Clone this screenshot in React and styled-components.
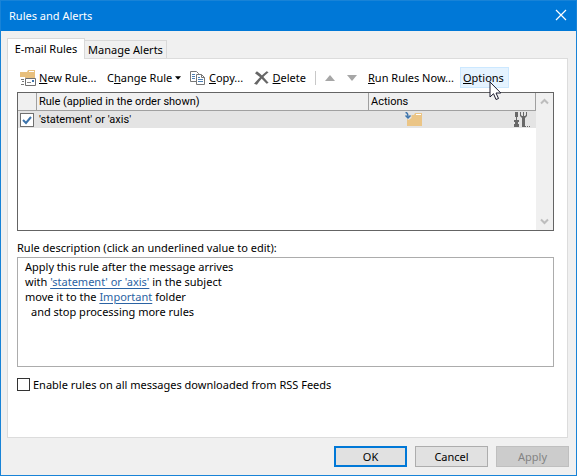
import React from "react";
import styled, { createGlobalStyle } from "styled-components";

const GlobalStyle = createGlobalStyle`
  * { box-sizing: border-box; }
  body {
    margin: 0;
    background: #f0f0f0;
    color: #000;
    font: 11px/15px "Noto Sans", "Open Sans", sans-serif;
  }
  button { font: inherit; color: inherit; margin: 0; }
`;

const Dialog = styled.main`
  display: flex;
  flex-direction: column;
  min-height: 100vh;
  border: 1px solid #1883d7;
  background: #f0f0f0;
`;

const TitleBar = styled.header`
  display: flex;
  align-items: center;
  justify-content: space-between;
  height: 30px;
  padding: 0 9px 2px 8px;
  background: #0078d7;
  color: #fff;
`;

const Title = styled.h1`
  margin: 0;
  font-size: 11px;
  font-weight: 400;
`;

const CloseButton = styled.button`
  display: flex;
  padding: 0;
  border: 0;
  background: none;
`;

const Tabs = styled.nav`
  display: flex;
  align-items: flex-end;
  margin: 7px 6px 0;
`;

const Tab = styled.button`
  flex: none;
  position: relative;
  height: ${(p) => (p.$active ? 21 : 18)}px;
  width: ${(p) => (p.$active ? 78 : 82)}px;
  padding: ${(p) => (p.$active ? "0 0 2px" : 0)};
  margin-bottom: ${(p) => (p.$active ? -1 : 0)}px;
  border: 1px solid #d9d9d9;
  border-left-width: ${(p) => (p.$active ? 1 : 0)}px;
  border-bottom: 0;
  background: ${(p) => (p.$active ? "#fff" : "#f0f0f0")};
  white-space: nowrap;
`;

const Panel = styled.section`
  flex: 1;
  display: flex;
  flex-direction: column;
  margin: 0 8px 0 6px;
  padding: 8px 13px 0 9px;
  border: 1px solid #dcdcdc;
  background: #fff;
`;

const Toolbar = styled.div`
  display: flex;
  align-items: center;
  height: 21px;
  white-space: nowrap;
`;

const ToolButton = styled.button`
  display: flex;
  align-items: center;
  gap: 3px;
  height: 21px;
  flex: none;
  width: ${(p) => p.$width}px;
  padding: 0 2px;
  border: 1px solid ${(p) => (p.$hot ? "#cce8ff" : "transparent")};
  background: ${(p) => (p.$hot ? "#e5f3ff" : "none")};
  position: relative;
`;

const Separator = styled.span`
  width: 1px;
  height: 14px;
  margin: 0 6px;
  background: #c8c8c8;
`;

const Pointer = styled.svg`
  position: absolute;
  left: 28px;
  top: 13px;
  z-index: 2;
  pointer-events: none;
`;

const RuleList = styled.div`
  display: flex;
  height: 139px;
  margin-top: 4px;
  border: 1px solid #646464;
`;

const RuleTable = styled.table`
  flex: 1;
  align-self: flex-start;
  table-layout: fixed;
  border-collapse: separate;
  border-spacing: 0;
  font-family: Roboto, "Noto Sans", sans-serif;
`;

const HeadCell = styled.th`
  width: ${(p) => (p.$width ? `${p.$width}px` : "auto")};
  height: 18px;
  padding: 0 2px;
  border-right: 1px solid #a0a0a0;
  border-bottom: 1px solid #a0a0a0;
  background: #f0f0f0;
  font-weight: 400;
  line-height: 16px;
  text-align: left;
`;

const Cell = styled.td`
  height: 17px;
  padding: 0 2px;
  background: #e4e4e4;
  line-height: 16px;
`;

const ActionIcons = styled.div`
  display: flex;
  justify-content: space-between;
  padding: 0 4px 0 34px;
`;

const Check = styled.input`
  appearance: none;
  display: block;
  flex: none;
  width: 13px;
  height: 13px;
  margin: 0;
  border: 1px solid #333;
  background: #fff;
  &:checked {
    width: 14px;
    height: 14px;
    border-color: #707070;
    background: #fff
      url("data:image/svg+xml,%3Csvg xmlns='http://www.w3.org/2000/svg' viewBox='0 0 12 12'%3E%3Cpath d='M2 6l3 3 5-6' fill='none' stroke='%233c73ab' stroke-width='2'/%3E%3C/svg%3E");
  }
`;

const ScrollBar = styled.div`
  display: flex;
  flex-direction: column;
  justify-content: space-between;
  width: 17px;
  background: #f0f0f0;
`;

const ScrollButton = styled.button`
  display: flex;
  align-items: center;
  justify-content: center;
  height: 17px;
  padding: 0;
  border: 0;
  background: none;
`;

const Heading = styled.h2`
  margin: 9px 0 2px;
  font-size: 11px;
  font-weight: 400;
`;

const Description = styled.div`
  height: 110px;
  padding: 1px 7px;
  border: 1px solid #acacac;
`;

const Line = styled.p`
  margin: 0;
  padding-left: ${(p) => (p.$indent ? 6 : 0)}px;
`;

const ValueLink = styled.a`
  color: #2b63a3;
  text-underline-offset: 2px;
`;

const FeedOption = styled.label`
  display: flex;
  align-items: center;
  gap: 3px;
  margin: 10px 0 16px;
`;

const Footer = styled.footer`
  display: flex;
  justify-content: flex-end;
  gap: 8px;
  padding: 8px 7px 8px;
`;

const DialogButton = styled.button`
  width: 73px;
  height: 21px;
  padding: 0;
  border: ${(p) => (p.$primary ? "2px solid #0078d7" : "1px solid #adadad")};
  background: #e1e1e1;
  line-height: 15px;
  &:disabled {
    border-color: #bfbfbf;
    background: #ccc;
    color: #838383;
  }
`;

const CloseIcon = () => (
  <svg width="12" height="12" viewBox="0 0 12 12">
    <path d="M1 1l10 10M11 1L1 11" stroke="#fff" strokeWidth="1.2" />
  </svg>
);

const NewRuleIcon = () => (
  <svg width="16" height="16" viewBox="0 0 16 16">
    <path d="M0 2h7l1-2h7v8H5v-1H0z" fill="#e8c07d" />
    <path d="M9 1.500h5" stroke="#fff" />
    <path d="M1 9.500h3M2 11.500h2M1 14.500h3" stroke="#777" />
    <path d="M5.500 8.500h10v7h-10z" fill="#fff" stroke="#707070" />
    <path d="M7 12.500h4" stroke="#888" />
    <path d="M12 10h2v2h-2z" fill="#3c73ab" />
  </svg>
);

const CopyIcon = () => (
  <svg width="16" height="16" viewBox="0 0 16 16">
    <path d="M.5 1.500h6l2 2v8h-8z" fill="#fff" stroke="#777" />
    <path d="M2 4.500h3M2 6.500h3M2 8.500h3" stroke="#4b7fb5" />
    <path d="M6.500 4.500h5l3 3v7h-8z" fill="#fff" stroke="#777" />
    <path d="M11.500 4.500v3h3" fill="none" stroke="#777" />
    <path d="M8 7.500h2M8 9.500h5M8 11.500h5" stroke="#4b7fb5" />
  </svg>
);

const DeleteIcon = () => (
  <svg width="16" height="16" viewBox="0 0 16 16">
    <path d="M1 3l2-2c4 3 8 7 12 12l-2 1C9 9 5 6 1 3z" fill="#666" />
    <path d="M13 1l2 1C10 6 6 10 3 15l-3-1C4 9 8 5 13 1z" fill="#666" />
  </svg>
);

const Triangle = ({ up, size = 10, color = "#a6a6a6" }) => (
  <svg width={size} height={size / 2 + 1} viewBox="0 0 10 6">
    <path d={up ? "M0 6L5 0l5 6z" : "M0 0h10L5 6z"} fill={color} />
  </svg>
);

const MoveIcon = () => (
  <svg width="17" height="16" viewBox="0 0 17 16">
    <path d="M2 3h7l1-2h7v13H2z" fill="#ebc586" />
    <path d="M11 2.500h5" stroke="#fff" />
    <path d="M.5 0h3l3 3v3l-3 2L0 5z" fill="#e4e4e4" />
    <path d="M.5 .5c2 0 2.500 1.500 2.500 5" fill="none" stroke="#3c73ab" strokeWidth="1.500" />
    <path d="M.5 3.500L3 6l2.500-2.500" fill="none" stroke="#3c73ab" strokeWidth="1.500" />
  </svg>
);

const ToolsIcon = () => (
  <svg width="16" height="16" viewBox="0 0 16 16">
    <path d="M1 0h3v5H1zM2 5h1v3H2zM0 8h5v2H4v2h1v3H0v-3h1v-2H0z" fill="#686868" />
    <path d="M6 0h1v3l1 1h1V0h1v4h1l1-1V0h1v4l-2 2v9H8V6L6 4z" fill="#686868" />
    <path d="M11 14h1v1h-1zM13 14h1v1h-1zM15 14h1v1h-1z" fill="#686868" />
  </svg>
);

const Chevron = ({ up }) => (
  <svg width="9" height="7" viewBox="0 0 9 7">
    <path d={up ? "M1 5.500L4.500 2 8 5.500" : "M1 1.500L4.500 5 8 1.500"} fill="none" stroke="#bdbdbd" strokeWidth="2" />
  </svg>
);

export default function App() {
  return (
    <Dialog>
      <GlobalStyle />
      <TitleBar>
        <Title>Rules and Alerts</Title>
        <CloseButton aria-label="Close"><CloseIcon /></CloseButton>
      </TitleBar>
      <Tabs role="tablist">
        <Tab role="tab" aria-selected="true" $active>E-mail Rules</Tab>
        <Tab role="tab" aria-selected="false">Manage Alerts</Tab>
      </Tabs>
      <Panel>
        <Toolbar role="toolbar">
          <ToolButton $width={87}><NewRuleIcon /><span><u>N</u>ew Rule...</span></ToolButton>
          <ToolButton $width={83}><span>C<u>h</u>ange Rule</span><Triangle size={6} color="#000" /></ToolButton>
          <ToolButton $width={64}><CopyIcon /><span><u>C</u>opy...</span></ToolButton>
          <ToolButton $width={58}><DeleteIcon /><span><u>D</u>elete</span></ToolButton>
          <Separator />
          <ToolButton $width={22} aria-label="Move up"><Triangle up /></ToolButton>
          <ToolButton $width={21} aria-label="Move down"><Triangle /></ToolButton>
          <ToolButton $width={95}><span><u>R</u>un Rules Now...</span></ToolButton>
          <ToolButton $width={49} $hot>
            <span><u>O</u>ptions</span>
            <Pointer width="13" height="20" viewBox="0 0 13 20">
              <path d="M1 1v15l3.500-3.300L7 18.500l2.500-1L7 12h4.800z" fill="#fff" stroke="#1a1a2e" />
            </Pointer>
          </ToolButton>
        </Toolbar>
        <RuleList>
          <RuleTable>
            <thead>
              <tr>
                <HeadCell $width={19} aria-label="Enabled" />
                <HeadCell $width={332}>Rule (applied in the order shown)</HeadCell>
                <HeadCell>Actions</HeadCell>
              </tr>
            </thead>
            <tbody>
              <tr>
                <Cell><Check type="checkbox" defaultChecked aria-label="'statement' or 'axis'" /></Cell>
                <Cell>'statement' or 'axis'</Cell>
                <Cell><ActionIcons><MoveIcon /><ToolsIcon /></ActionIcons></Cell>
              </tr>
            </tbody>
          </RuleTable>
          <ScrollBar>
            <ScrollButton aria-label="Scroll up"><Chevron up /></ScrollButton>
            <ScrollButton aria-label="Scroll down"><Chevron /></ScrollButton>
          </ScrollBar>
        </RuleList>
        <Heading>Rule description (click an underlined value to edit):</Heading>
        <Description>
          <Line>Apply this rule after the message arrives</Line>
          <Line>with <ValueLink href="#condition">'statement' or 'axis'</ValueLink> in the subject</Line>
          <Line>move it to the <ValueLink href="#folder">Important</ValueLink> folder</Line>
          <Line $indent>and stop processing more rules</Line>
        </Description>
        <FeedOption>
          <Check type="checkbox" />
          Enable rules on all messages downloaded from RSS Feeds
        </FeedOption>
      </Panel>
      <Footer>
        <DialogButton $primary>OK</DialogButton>
        <DialogButton>Cancel</DialogButton>
        <DialogButton disabled>Apply</DialogButton>
      </Footer>
    </Dialog>
  );
}
